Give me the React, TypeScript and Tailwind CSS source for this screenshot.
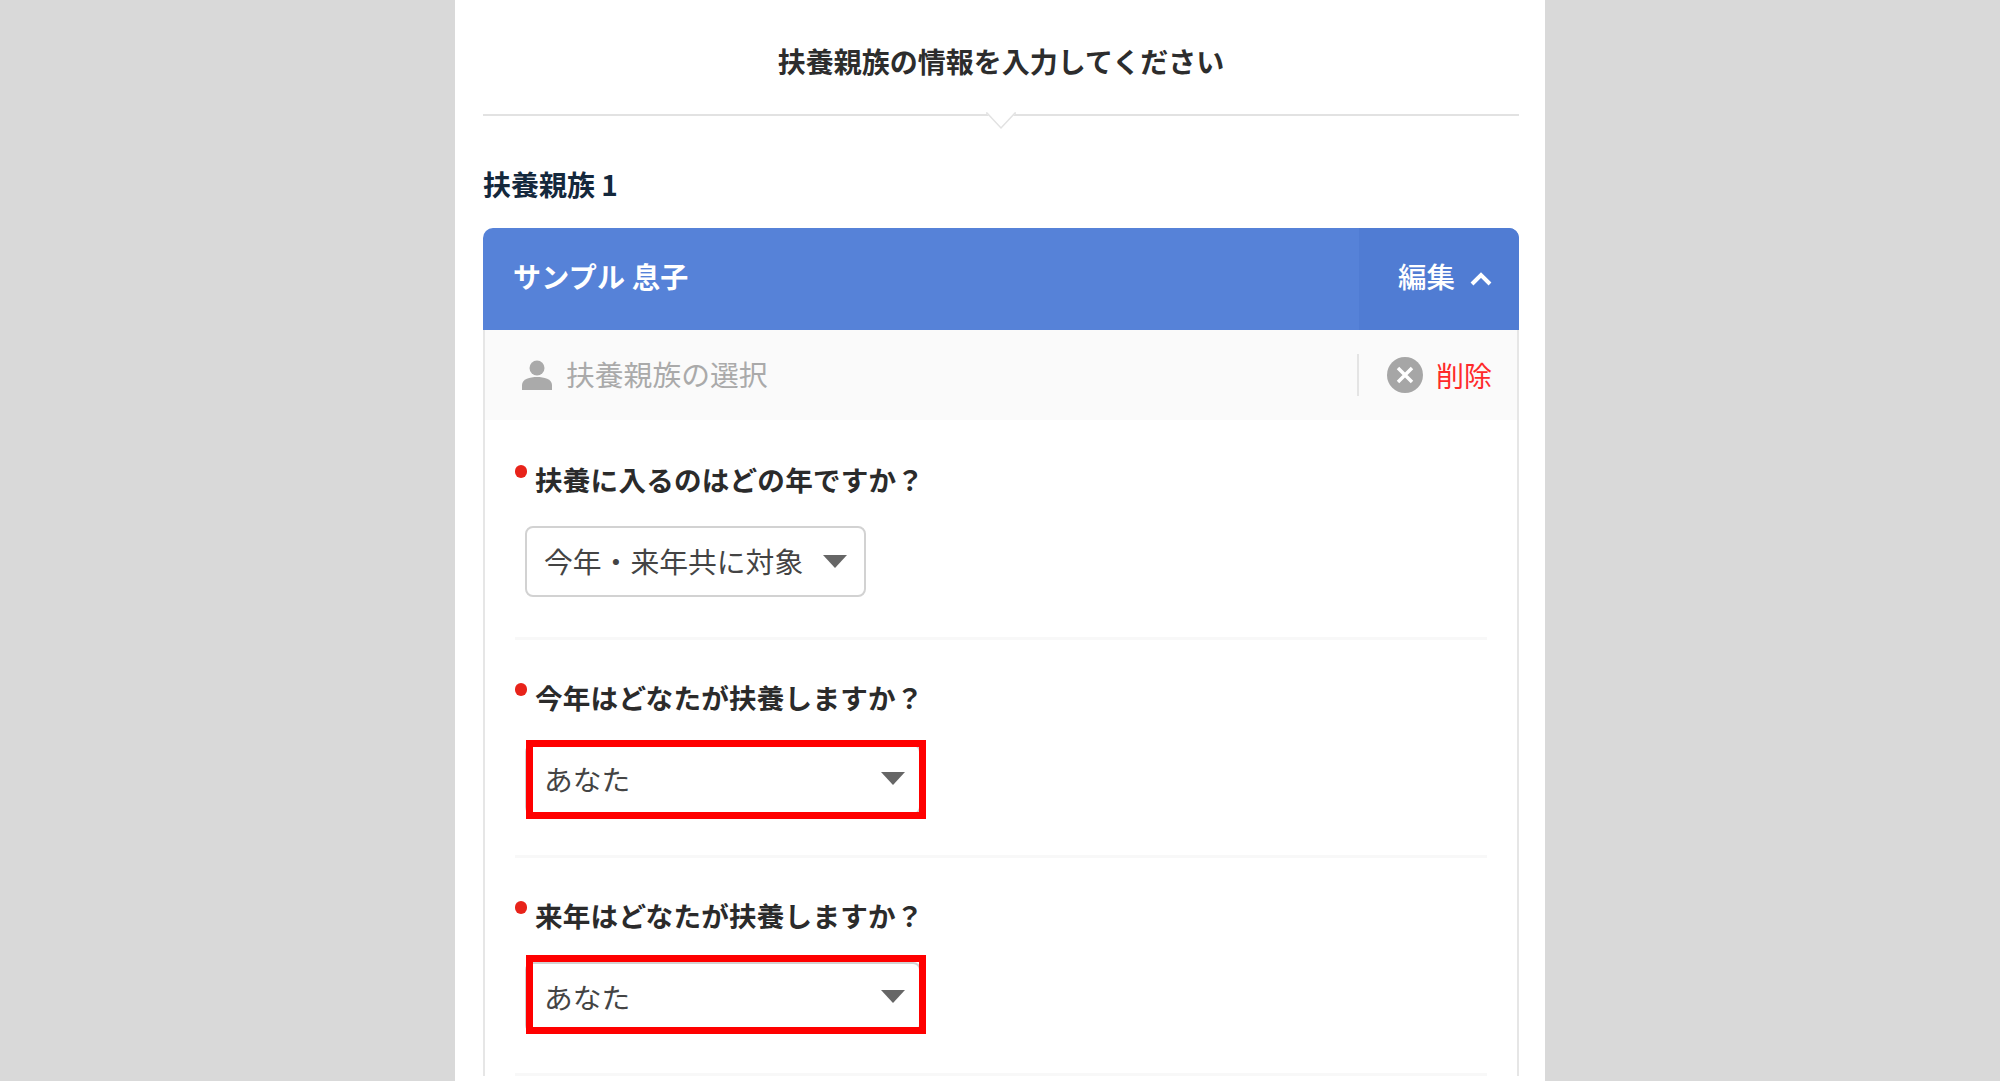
const font = { fontFamily: '"Noto Sans CJK JP", "Liberation Sans", sans-serif' };

function Caret({ className }: { className: string }) {
  return (
    <svg className={className} width="24" height="13" viewBox="0 0 24 13">
      <path d="M0 0H24L12 13Z" fill="#666666" />
    </svg>
  );
}

function Field({
  label,
  value,
  first,
  highlight,
  boxTop,
}: {
  label: string;
  value: string;
  first?: boolean;
  highlight?: boolean;
  boxTop?: string;
}) {
  return (
    <div className={`border-b-[3px] border-[#f8f8f8] pb-[40px] ${first ? "pt-[40px]" : "pt-[38px]"}`}>
      <div className="flex items-start gap-[8px]">
        <span className="mt-[5px] h-[13px] w-[12px] rounded-full bg-[#e8231a]" />
        <span className="-mt-[1px] text-[27.6px] leading-[40px] font-bold tracking-[0.2px] text-[#2b2b2b]">{label}</span>
      </div>
      <div className="relative mt-[27px] ml-[10px] inline-block align-top">
        <div
          className={`flex h-[71px] items-center rounded-[8px] border-2 border-[#d2d2d2] bg-white pl-[17px] ${
            highlight ? "w-[396px]" : "w-[341px]"
          }`}
        >
          <span className="text-[28.8px] leading-none text-[#444444]">{value}</span>
          <Caret className={`shrink-0 ${highlight ? "ml-auto mr-[14px] -mt-[2px]" : "ml-auto mr-[17px] -mt-[1px]"}`} />
        </div>
        {highlight && (
          <div className={`absolute left-[1px] h-[79px] w-[400px] border-[7px] border-[#ff0000] ${boxTop}`} />
        )}
      </div>
    </div>
  );
}

export default function App() {
  return (
    <div className="flex h-[1081px] justify-center overflow-hidden bg-[#d9d9d9]" style={font}>
      <div className="w-[1090px] bg-white pr-[26px] pl-[28px]">
        <div className="relative flex h-[116px] items-center justify-center border-b-2 border-[#e2e2e2] pt-[8px]">
          <h1 className="text-[28px] leading-[40px] font-bold text-[#2d2d2d]">
            扶養親族の情報を入力してください
          </h1>
          <svg
            className="absolute -bottom-[16px] left-1/2 -ml-[15px]"
            width="30"
            height="18"
            viewBox="0 0 30 18"
          >
            <path d="M1 0 H29 V2 L15 16 L1 2Z" fill="#ffffff" />
            <path d="M0 1 H1 L15 16 L29 1 H30" fill="none" stroke="#e2e2e2" strokeWidth="1.5" />
          </svg>
        </div>

        <h2 className="mt-[51px] mb-[27px] text-[28px] leading-[34px] font-bold text-[#14283c]">扶養親族 1</h2>

        <div className="flex h-[102px] overflow-hidden rounded-t-[10px] bg-[#5682d8] text-white">
          <div className="flex flex-1 items-center pb-[6px] pl-[30px] text-[28px] font-bold tracking-[0.3px]">サンプル 息子</div>
          <div className="flex w-[160px] items-center bg-[#507cd3] pl-[39px]">
            <span className="-mt-[5px] text-[28.5px] font-medium">編集</span>
            <svg className="ml-[15px]" width="22" height="14" viewBox="0 0 22 14">
              <path d="M2 12 L11 3 L20 12" fill="none" stroke="#ffffff" strokeWidth="4" />
            </svg>
          </div>
        </div>

        <div className="border-x-2 border-[#e6e6e6]">
          <div className="flex h-[90px] items-center bg-[#fafafa] pl-[37px]">
            <svg width="30" height="30" viewBox="0 0 30 30">
              <circle cx="15" cy="8" r="7.5" fill="#aaaaaa" />
              <path d="M0 30 V25 C0 19 8 17 15 17 C22 17 30 19 30 25 V30Z" fill="#aaaaaa" />
            </svg>
            <span className="-mt-[2px] ml-[14px] text-[28.8px] leading-none text-[#aaaaaa]">扶養親族の選択</span>
            <div className="ml-auto flex h-[42px] items-center border-l-2 border-[#e4e4e4] pr-[25px] pl-[28px]">
              <svg width="36" height="36" viewBox="0 0 36 36">
                <circle cx="18" cy="18" r="18" fill="#a6a6a6" />
                <path d="M11 11 L25 25 M25 11 L11 25" stroke="#ffffff" strokeWidth="3.5" />
              </svg>
              <span className="-mt-[1px] ml-[13px] text-[28px] leading-none text-[#ff2a2a]">削除</span>
            </div>
          </div>
          <div className="px-[30px]">
            <Field first label="扶養に入るのはどの年ですか？" value="今年・来年共に対象" />
            <Field highlight boxTop="-top-[4px]" label="今年はどなたが扶養しますか？" value="あなた" />
            <Field highlight boxTop="-top-[7px]" label="来年はどなたが扶養しますか？" value="あなた" />
          </div>
        </div>
      </div>
    </div>
  );
}
